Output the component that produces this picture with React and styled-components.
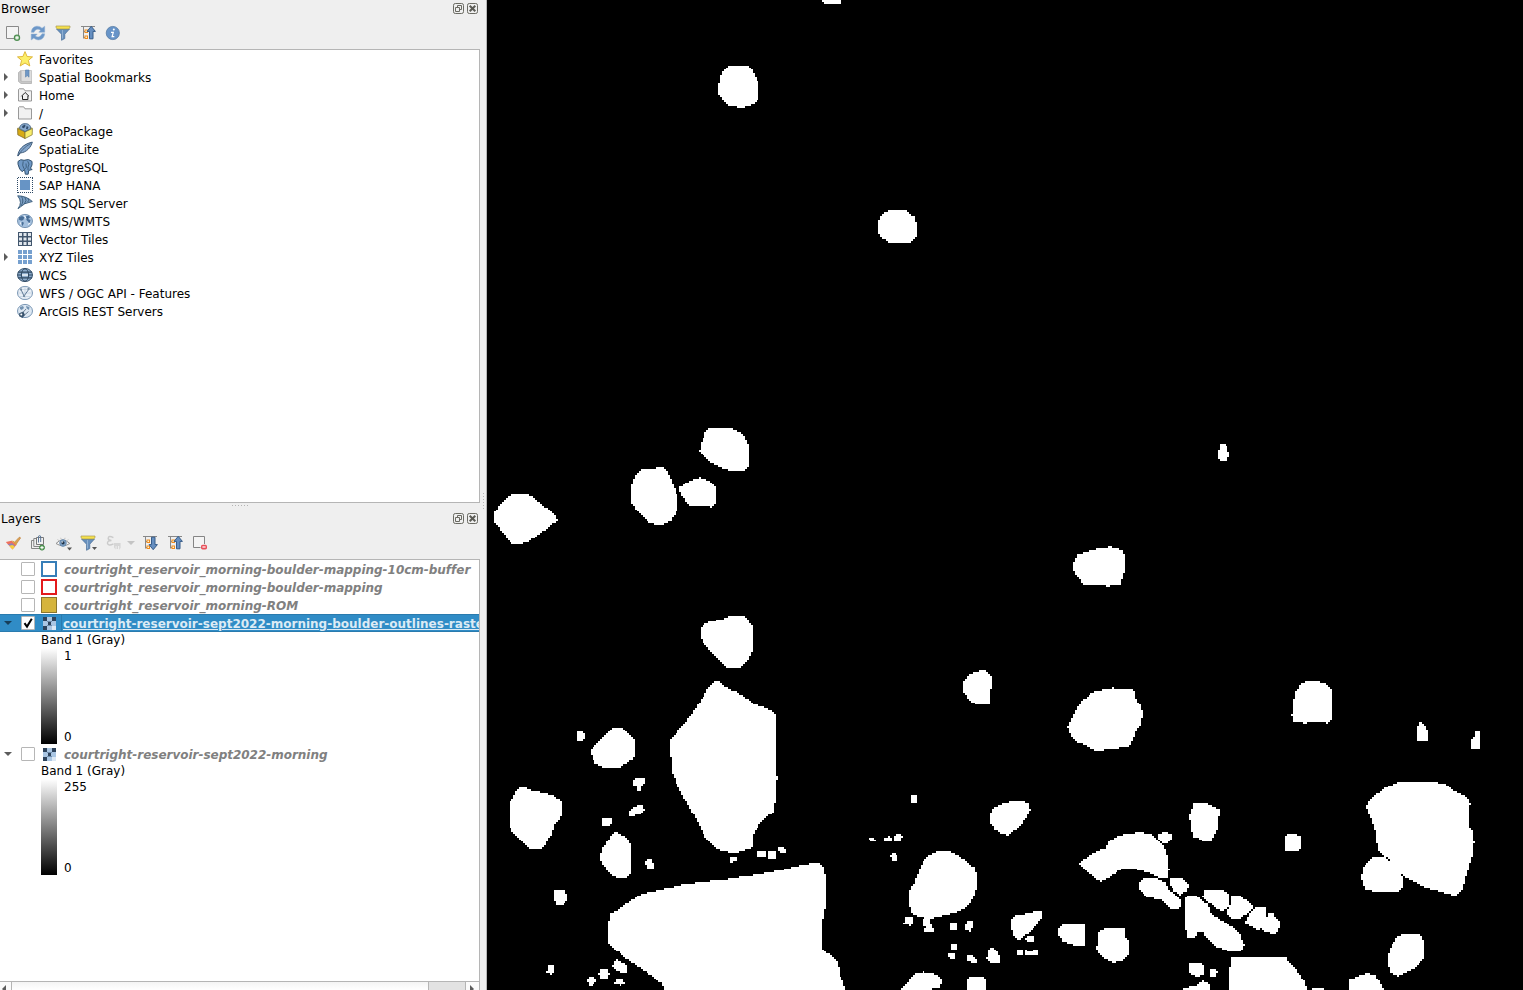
import React from "react";
import styled, { createGlobalStyle } from "styled-components";

const GlobalStyle = createGlobalStyle`
  * { box-sizing: border-box; }
  body {
    margin: 0;
    overflow: hidden;
    background: #efefef;
    color: #000;
    font-family: "DejaVu Sans", Verdana, sans-serif;
    font-size: 12px;
  }
  svg { display: block; flex: none; }
`;

const Window = styled.div`
  display: flex;
  width: 1523px;
  height: 990px;
  overflow: hidden;
`;
const Docks = styled.div`
  display: flex;
  flex-direction: column;
  width: 480px;
  flex: none;
`;
const SideHandle = styled.div`
  display: flex;
  align-items: center;
  justify-content: center;
  width: 7px;
  padding-top: 13px;
  flex: none;
  border-right: 1px solid #b8b8b8;
`;
const DockHandle = styled.div`
  display: flex;
  justify-content: center;
  height: 7px;
  padding-top: 2px;
  flex: none;
`;
const Dots = styled.div`
  width: ${(p) => (p.$vertical ? "1px" : "17px")};
  height: ${(p) => (p.$vertical ? "17px" : "1px")};
  background: repeating-linear-gradient(${(p) => (p.$vertical ? "180deg" : "90deg")}, #b4b4b4 0 1px, transparent 1px 3px);
`;
const Dock = styled.section`
  display: flex;
  flex-direction: column;
  height: ${(p) => p.$height}px;
  flex: none;
`;
const TitleBar = styled.header`
  display: flex;
  align-items: center;
  height: 17px;
  padding: 0 2px 0 1px;
  flex: none;
  gap: 3px;
`;
const Title = styled.span`
  flex: 1;
  line-height: 17px;
  padding-top: 2px;
`;
const ToolBar = styled.div`
  display: grid;
  grid-template-columns: ${(p) => p.$columns};
  align-items: center;
  height: 32px;
  padding-left: 5px;
  flex: none;
`;
const Tree = styled.div`
  flex: 1;
  min-height: 0;
  overflow: hidden;
  background: #fff;
  border: solid #b5b5b5;
  border-width: 1px 1px ${(p) => (p.$open ? 0 : 1)}px 0;
  display: flex;
  flex-direction: column;
`;
const TreeRow = styled.div`
  display: flex;
  align-items: center;
  height: 18px;
  flex: none;
  white-space: nowrap;
`;
const Branch = styled.span`
  display: flex;
  align-items: center;
  width: ${(p) => p.$width}px;
  padding-left: 4px;
  flex: none;
`;
const TreeLabel = styled.span`
  margin-left: 6px;
  padding-top: 2px;
  line-height: 18px;
`;
const LayerRow = styled(TreeRow)`
  background: ${(p) => (p.$selected ? "#308cc6" : "none")};
  box-shadow: ${(p) => (p.$selected ? "inset 0 1px #2a7bae, inset 0 -1px #2a7bae" : "none")};
`;
const CheckBox = styled.span`
  display: flex;
  width: 14px;
  height: 14px;
  border: 1px solid #b6b6b6;
  border-radius: 1px;
  background: #fff;
  flex: none;
`;
const Symbol = styled.span`
  display: flex;
  align-items: center;
  justify-content: center;
  width: 16px;
  height: 16px;
  margin-left: 6px;
  flex: none;
`;
const Swatch = styled.span`
  width: 16px;
  height: 16px;
  background: ${(p) => p.$fill};
  border: ${(p) => p.$width}px solid ${(p) => p.$stroke};
`;
const LayerName = styled.span`
  flex: 1;
  min-width: 0;
  overflow: hidden;
  margin-left: 4px;
  padding-left: ${(p) => (p.$selected ? 1 : 3)}px;
  height: 18px;
  line-height: ${(p) => (p.$selected ? 18 : 20)}px;
  font-weight: bold;
  font-style: ${(p) => (p.$selected ? "normal" : "italic")};
  letter-spacing: ${(p) => (p.$selected ? "0" : "-0.018px")};
  color: ${(p) => (p.$selected ? "#dcebf5" : "#808080")};
  text-decoration: ${(p) => (p.$selected ? "underline" : "none")};
  border: ${(p) => (p.$selected ? "1px solid #2a7bae" : "none")};
  border-right: 0;
`;
const BandLabel = styled.div`
  height: 16px;
  line-height: 17px;
  padding-left: 41px;
  flex: none;
`;
const Ramp = styled.div`
  display: flex;
  height: 96px;
  margin: 0 0 1px 41px;
  flex: none;
`;
const RampBar = styled.span`
  width: 16px;
  background: linear-gradient(#fff, #000);
`;
const RampLabels = styled.span`
  display: flex;
  flex-direction: column;
  justify-content: space-between;
  margin-left: 7px;
  padding-top: 1px;
  margin-bottom: -1px;
  line-height: 15px;
`;
const Spacer = styled.div`
  flex: 1;
`;
const ScrollBar = styled.div`
  display: flex;
  height: 9px;
  border-top: 1px solid #b5b5b5;
  background: linear-gradient(#f4f4f4, #fff);
  flex: none;
`;
const ScrollButton = styled.span`
  width: ${(p) => (p.$next ? 14 : 12)}px;
  padding: 3px 0 0 ${(p) => (p.$next ? 4 : 2)}px;
  border: solid #b5b5b5;
  border-width: ${(p) => (p.$next ? "0 0 0 1px" : "0 1px 0 0")};
  background: #fbfbfb;
`;
const ScrollThumb = styled.span`
  flex: 1;
`;
const ScrollRest = styled.span`
  width: 37px;
  border-left: 1px solid #b5b5b5;
  background: #e2e2e2;
`;
const MapCanvas = styled.main`
  flex: 1;
  background: #000;
`;

function Icon({ children, w = 16, h = 16 }) {
  return <svg width={w} height={h} viewBox={`0 0 ${w} ${h}`} fill="none">{children}</svg>;
}

const INK = "#3a5878";
const BLUE = "#6c97c8";

const RightArrow = () => <Icon w={5} h={8}><path d="M0 0L4 4L0 8Z" fill="#5c5c5c" /></Icon>;
const DownArrow = ({ color = "#5c5c5c" }) => <Icon w={8} h={4}><path d="M0 0H8L4 4Z" fill={color} /></Icon>;

const FloatButton = () => (
  <Icon w={11} h={11}>
    <rect x=".5" y=".5" width="10" height="10" rx="1.8" stroke="#6b6b63" />
    <path d="M4.5 4V2.5H8.5V6.5H7M2.5 4.5H6.5V8.5H2.5Z" stroke="#6b6b63" />
  </Icon>
);
const CloseButton = () => (
  <Icon w={11} h={11}>
    <rect x=".5" y=".5" width="10" height="10" rx="1.8" stroke="#6b6b63" />
    <path d="M2.7 2.7L8.3 8.3M8.3 2.7L2.7 8.3" stroke="#5b5b55" strokeWidth="2" />
  </Icon>
);

const AddLayer = () => (
  <Icon>
    <path d="M9.5 13.5H1.5V1.5H13.5V10" fill="#f4f4f4" stroke="#8a8a8a" />
    <circle cx="12" cy="12.8" r="2.6" fill="#b4d3b2" stroke="#509054" strokeWidth="1.2" />
    <path d="M12 11.4V14.2M10.6 12.8H13.4" stroke="#fff" strokeWidth=".9" />
  </Icon>
);
const Refresh = () => (
  <Icon>
    <path d="M1.3 7.3C1.5 3.2 4.2 1.2 7.2 1.2C9.3 1.2 10.7 2 12 3.3L14.7 1.2V7.2H8.8L10.5 5.2C8.2 3.4 5.2 4.1 4 7.3Z" fill={BLUE} stroke="#8eafd2" strokeWidth=".5" />
    <path d="M14.7 8.8C14.3 12.7 11.7 14.9 8.5 14.9C6.4 14.9 5 14.1 3.9 13L1.2 15V9.1H7.2L5.4 11C7.8 12.8 10.7 12 12 8.8Z" fill={BLUE} stroke="#8eafd2" strokeWidth=".5" />
  </Icon>
);
const FunnelShape = () => (
  <>
    <path d="M1.5 4L6.5 9.2V15.3L9.8 13.5V9.2L14.5 4Z" fill="#6790bd" stroke="#4c7099" strokeWidth=".7" />
    <path d="M7.5 5V13.5" stroke="#91b0d2" />
    <path d="M1 1H15V2.3L13.8 4H2.2L1 2.3Z" fill="#f4e14c" stroke="#a99a57" strokeWidth=".7" />
  </>
);
const Funnel = () => <Icon><FunnelShape /></Icon>;
const FunnelMenu = () => <Icon w={18}><FunnelShape /><path d="M12 12H17L14.5 15Z" fill="#555" /></Icon>;
const TreeMarks = () => (
  <>
    <path d="M1 1.5H15M3.5 2V13.5M3.5 6.5H5M3.5 12.5H5" stroke="#888" />
    <rect x="5" y="5" width="2.5" height="2.5" fill="#fff2ce" stroke="#ef8b1d" />
    <rect x="5" y="11" width="2.5" height="2.5" fill="#fff2ce" stroke="#ef8b1d" />
  </>
);
const Collapse = () => <Icon><TreeMarks /><path d="M11.2 1.3L15.4 6.4H13V13.8H9.5V6.4H7.1Z" fill="#668fc1" stroke="#365c89" /></Icon>;
const Expand = () => <Icon><TreeMarks /><path d="M11.2 14.7L15.4 9.6H13V2.2H9.5V9.6H7.1Z" fill="#668fc1" stroke="#365c89" /></Icon>;
const Info = () => (
  <Icon>
    <circle cx="7.8" cy="8" r="6.6" fill="#6794c8" stroke="#587ca5" strokeWidth=".8" />
    <circle cx="8.8" cy="4.6" r="1" fill="#fff" />
    <path d="M6 7.3H8.3L7.1 11.7H9.3" stroke="#fff" strokeWidth="1.2" />
  </Icon>
);
const Brush = () => (
  <Icon>
    <path d="M8.6 8.2L14 2.4Q15.5 1.6 15.4 3.2L10.8 9.8Z" fill="#dba255" stroke="#be7e3b" strokeWidth=".6" />
    <path d="M.8 7L6.5 5.8L11.3 10L7.5 14.4Z" fill="#f0705c" />
    <path d="M2.6 9.2L7 8.2L10 11L8.4 13Z" fill="#8b84bd" />
    <path d="M4.2 10.8L7.6 10L9.8 11.8L7.5 14.6Z" fill="#f7cf3c" />
    <path d="M6.4 5.6L8.6 6L11.8 9L11 10.2Z" fill="#d9a03f" />
  </Icon>
);
const AddGroup = () => (
  <Icon>
    <path d="M4 5.5H1.5V13.5H10M6 3.5H3.8V11.5H10" stroke="#858585" />
    <path d="M6.5 2.5H13.5V9.5H6.5Z" fill="#f2f2f2" stroke="#777" />
    <path d="M8.5 7.5V2Q8.5 .6 9.6 .6Q10.7 .6 10.7 2V7" stroke="#5b7697" strokeWidth="1" />
    <circle cx="12" cy="12.6" r="2.5" fill="#69a869" stroke="#438848" />
    <path d="M12 11V14.2M10.4 12.6H13.6" stroke="#fff" />
  </Icon>
);
const Eye = () => (
  <Icon w={18}>
    <path d="M1 8.5Q7.6 1.5 14.8 8.5Q8 13 1 8.5Z" fill="#f8f8f8" stroke="#909090" />
    <circle cx="8" cy="8" r="3.4" fill="#7b9fc4" stroke="#577ba0" strokeWidth=".6" />
    <circle cx="8" cy="7.8" r="1.6" fill="#203348" />
    <circle cx="7.2" cy="7" r=".7" fill="#fff" />
    <path d="M2.5 4.5L4 5.7M5.7 2.8L6.3 4.5M10 2.8L9.7 4.4M13.3 4.4L12 5.7" stroke="#b4b4b4" strokeWidth=".8" />
    <path d="M12 12.5H17L14.5 15.5Z" fill="#555" />
  </Icon>
);
const Expression = () => (
  <Icon>
    <path d="M7.4 2.6Q2.4 .1 2.2 3.3Q2.2 5.5 5.5 5.5Q1.2 5.6 1.5 8.3Q2.2 11.4 7.5 8.9" stroke="#cbcbcb" strokeWidth="1.5" />
    <path d="M8 8H14.6V12.7L13.2 15V11H12V14H10.6V11H9.6V14.5L8 12.6Z" fill="#d6d6d6" />
  </Icon>
);
const RemoveLayer = () => (
  <Icon>
    <path d="M8.5 12.5H1.5V1.5H12.5V9" fill="#f4f4f4" stroke="#858585" />
    <rect x="9" y="9.7" width="6" height="4.7" rx="1.6" fill="#e8505a" />
    <path d="M10.4 12H13.6" stroke="#fff" strokeWidth="1.2" />
  </Icon>
);

const Star = () => <Icon><path d="M8 .6L10.1 5.5L15.5 5.9L11.4 9.4L12.8 15L8 12L3.2 15L4.6 9.4L.5 5.9L5.9 5.5Z" fill="#fcef68" stroke="#dfb63b" /></Icon>;
const Bookmark = () => (
  <Icon>
    <path d="M1.5 3.5L4 1.5V12L14.5 12V14.5H4L1.5 12.5Z" fill="#c8c8c8" stroke="#a8a8a8" strokeWidth=".7" />
    <path d="M4.3 1.5H14.5V12.5H4.3Z" fill="#dedede" stroke="#b9b9b9" strokeWidth=".7" />
    <path d="M8.5 1H12V8.2L10.2 6.5L8.5 8.2Z" fill="#6f98c6" stroke="#587fa9" strokeWidth=".6" />
  </Icon>
);
const FolderShape = () => <path d="M1.5 14V2.5L2.2 1.8H6.7L8 3.8H14.5V14Z" fill="#f1f1f1" stroke="#8d8d8d" strokeWidth=".9" />;
const Folder = () => <Icon><FolderShape /></Icon>;
const HomeFolder = () => <Icon><FolderShape /><path d="M4.4 9.3L8.2 5.5L12 9.3M5.5 8.8V12.5H10.9V8.8" stroke="#222" /></Icon>;
const GeoPackage = () => (
  <Icon>
    <path d="M.6 5.4L8 8.8V15.5L.8 11.8Z" fill="#d8ab15" stroke="#806b25" strokeWidth=".8" />
    <path d="M15.4 5.4L8 8.8V15.5L15.2 11.8Z" fill="#f8ed6b" stroke="#8c7f36" strokeWidth=".8" />
    <path d="M.8 5.4L4 3.5L8 9L12.5 3.5L15.2 5.4L8 8.8Z" fill="#e4d34b" stroke="#766b38" strokeWidth=".5" />
    <path d="M2.6 5.8C2.4 2.4 5 .6 8.2 .6C11.6 .6 14 2.6 13.6 5.8L8 8.4Z" fill="#88a9cd" stroke={INK} strokeWidth=".7" />
    <path d="M5.2 3L8 1.4L8.5 3L7 5.2L5.2 4.7ZM9.7 3L11.5 4L10.5 6.4L9 5.8Z" fill="#304c6d" />
  </Icon>
);
const Feather = () => (
  <Icon>
    <path d="M.8 15C1.2 9.3 5.5 3.3 15.3 1.1C14 6 9.8 11.5 3.1 12Z" fill="#85a7cd" stroke="#3c5977" />
    <path d="M1 15.2Q4.5 7.8 13.5 2.6" stroke="#3c5977" strokeWidth=".8" />
  </Icon>
);
const Elephant = () => (
  <Icon>
    <path d="M1 2.5Q3.5-.5 7 1.3Q12-.7 15 2.4Q15.8 6 13.4 9.4L15.2 10.5L11.7 11.4L11.2 15.2H8.3L7.5 10.5L5.2 12.7Q2.3 11 1 5.2Z" fill="#6f98c5" stroke="#34536f" />
    <path d="M6.2 2.3Q4.8 6.7 7 9.7M10.7 2.2Q13.2 5 11 8.2V11M7.5 10.3L9.3 8.3L9 4.5" stroke="#34536f" strokeWidth=".8" />
  </Icon>
);
const SapHana = () => (
  <Icon>
    <rect x="3" y="3" width="10" height="10" fill="#6794c5" />
    <path d="M1 .5H16M1 15.5H16M.5 1V16M15.5 1V16" stroke="#2f4a66" strokeDasharray="1 1" />
  </Icon>
);
const SqlServer = () => (
  <Icon>
    <path d="M.7 .8Q9.5 1 15.3 6.5Q7.5 7.3 1 13.7Q6 7.5 .7 .8Z" fill="#7c9fc4" stroke="#3f617f" />
    <path d="M4.4 1.2Q7.5 6 4 11M7.8 2Q10.5 5.5 7.3 9M11 3.5Q12.7 5.4 10.5 7.2" stroke="#3f617f" />
  </Icon>
);
function Globe({ dark, fill = "#d3dfeb", children }) {
  return (
    <Icon>
      <ellipse cx="8" cy="8" rx="7.5" ry="6.6" fill={fill} stroke={dark ? "#2e4862" : "#6c8bac"} strokeWidth=".9" />
      {children}
    </Icon>
  );
}
const Wms = () => (
  <Globe fill="#a6c1de">
    <path d="M2 4.2L5 3L7.3 4.3L6.3 7L4.3 7.7L2 6.7ZM5 8.7L7 9.8L5.6 13L4.2 11ZM9 3.2L11.8 2.5L13 4.5L11 6L13.5 7L12.5 10.7L11 8.5L9.5 7Z" fill="#486e97" />
    <path d="M7.2 2.5L9 5.5M3.5 9.5L4 11.5M11 11.5L13 10" stroke="#fff" />
  </Globe>
);
const VectorTiles = () => (
  <Icon>
    <rect x="1" y="1" width="14" height="14" fill="#42566d" />
    {[0, 1, 2].flatMap((r) => [0, 1, 2].map((c) => <rect key={`${r}${c}`} x={2 + c * 4.5} y={2 + r * 4.5} width="3" height="3" fill="#e0e6ec" />))}
  </Icon>
);
const XyzTiles = () => (
  <Icon>
    {[0, 1, 2].flatMap((r) => [0, 1, 2].map((c) => <rect key={`${r}${c}`} x={1 + c * 5} y={1 + r * 5} width="4" height="4" fill="#76a0cf" />))}
  </Icon>
);
const Wcs = () => (
  <Globe dark fill="#8baaca">
    <path d="M1 5.2H15M.6 8H15.4M1 10.8H15" stroke="#2e4862" strokeWidth="1.2" />
    <ellipse cx="8" cy="8" rx="3.6" ry="6.2" stroke="#2e4862" />
    <path d="M5 8H11" stroke="#d7e4f1" strokeWidth="2" />
  </Globe>
);
const Wfs = () => (
  <Globe fill="#e9eff6">
    <path d="M8 1.5V14.5M1 8H15M2.5 4.5H13.5M2.5 11.5H13.5" stroke="#bdcedf" strokeWidth=".7" />
    <path d="M4 4.5L7 11L12 4" stroke="#607b97" />
    <path d="M3 3.5H5V5.5H3ZM6 10H8V12H6ZM10.5 3H12.5V5H10.5Z" fill="#768da3" />
  </Globe>
);
const ArcGis = () => (
  <Globe fill="#dce7f2">
    <path d="M3 4L6 3L7 5L4.7 7L3 6ZM9 3L12.5 4L12 7L9.7 5.5Z" fill="#7392b1" />
    <path d="M2.2 10.2L6.3 8.6L8 12L5.5 15L2.2 13.3Z" fill="#38536e" />
    <path d="M5 10.5L9 6M7.5 12L11.5 8.5" stroke="#50677f" strokeWidth=".8" />
    <circle cx="4.3" cy="11.5" r="1" fill="#fff" />
  </Globe>
);
const RasterIcon = () => (
  <svg width="13" height="13" viewBox="0 0 13 13" shapeRendering="crispEdges">
    <rect width="13" height="13" fill="#aac6e3" />
    <path d="M0 0H4V4H0ZM9 0H13V4H9ZM5 5H8V8H5ZM0 9H4V13H0Z" fill="#2e435b" />
    <path d="M4 4H9V5H4ZM4 8H9V9H4Z" fill="#6f8dac" />
    <path d="M9 9H13V13H9Z" fill="#dce8f4" />
  </svg>
);
const Check = () => <Icon w={12} h={12}><path d="M2.5 6.2L5 9.6L9.8 1.8" stroke="#000" strokeWidth="2" /></Icon>;

const BROWSER_ITEMS = [
  ["Favorites", Star, false],
  ["Spatial Bookmarks", Bookmark, true],
  ["Home", HomeFolder, true],
  ["/", Folder, true],
  ["GeoPackage", GeoPackage, false],
  ["SpatiaLite", Feather, false],
  ["PostgreSQL", Elephant, false],
  ["SAP HANA", SapHana, false],
  ["MS SQL Server", SqlServer, false],
  ["WMS/WMTS", Wms, false],
  ["Vector Tiles", VectorTiles, false],
  ["XYZ Tiles", XyzTiles, true],
  ["WCS", Wcs, false],
  ["WFS / OGC API - Features", Wfs, false],
  ["ArcGIS REST Servers", ArcGis, false],
];

// Boulder outlines, grouped by map sheet; each sheet has an origin and a unit size.
const SHEETS = [
  { x: 0, y: 0, scale: 1, outlines: [
    "822,0 843,0 841,3 825,3",
    "728,66 748,66 752,69 755,76 759,84 759,100 752,105 742,108 727,105 719,95 717,90 721,74",
    "888,211 905,210 915,218 917,226 916,238 910,244 890,244 880,236 877,226 882,214",
    "1220,444 1226,444 1229,453 1228,462 1219,462 1218,452",
    "1078,554 1100,548 1110,547 1124,550 1125,570 1121,584 1108,586 1083,584 1076,575 1072,566",
  ] },
  { x: 488, y: 410, scale: 1 / 3, outlines: [
    "75,252 115,252 135,262 160,283 195,308 210,330 165,365 120,395 95,402 75,402 55,382 30,350 20,335 18,312 35,285 60,262",
    "460,178 505,176 510,171 528,172 545,198 555,225 568,258 566,305 545,335 512,347 485,338 450,305 429,275 430,230 442,198",
    "570,235 605,212 635,202 670,215 684,235 684,280 675,290 610,289 590,268",
    "660,58 735,57 765,72 783,105 783,168 770,182 735,185 690,170 660,152 633,125 640,100 652,68",
    "640,650 660,636 700,628 720,618 770,619 791,645 795,710 790,735 760,772 715,772 685,745 648,700 639,680",
  ] },
  { x: 488, y: 660, scale: 1 / 3, outlines: [
    "685,60 700,70 718,85 750,97 780,118 800,133 838,145 863,163 864,250 862,300 864,345 870,348 868,356 865,365 863,410 857,455 832,474 803,508 797,520 792,562 765,574 735,579 700,573 680,563 655,535 640,510 620,470 600,435 575,392 560,355 550,330 549,290 543,288 543,243 575,207 605,170 625,142 645,112 665,78",
    "390,200 405,202 425,222 441,243 441,288 432,300 398,323 345,322 325,314 312,298 309,270 330,250 350,230 375,205",
    "268,216 280,216 288,222 288,238 280,243 268,240",
    "434,368 440,353 467,353 467,370 460,375 458,392 446,395 444,378 434,376",
    "465,434 468,450 450,465 430,468 421,464 421,455 440,438",
    "347,474 371,474 371,486 363,498 343,498 342,482",
    "92,384 112,384 130,392 160,397 198,407 222,428 224,452 213,480 200,492 188,528 163,567 142,570 122,565 105,550 75,515 66,505 66,428 80,405",
    "380,516 400,522 415,535 428,550 428,642 412,655 390,657 368,643 342,610 337,590 342,565 358,546 370,522",
    "474,598 490,594 497,612 497,626 480,627 471,612",
    "200,687 228,687 240,705 238,722 218,738 203,734 198,715",
    "722,588 750,588 745,600 733,609 723,605",
    "808,571 832,571 832,590 815,594 804,584",
    "843,576 863,576 863,594 843,594",
    "864,568 875,558 892,570 892,577 878,580",
    "990,606 960,612 910,622 870,632 810,643 750,652 700,660 630,667 580,675 520,688 460,702 410,735 367,762 360,795 360,852 380,868 415,895 460,925 495,950 520,970 530,990 1074,990 1065,965 1054,940 1050,910 1030,890 1004,865 1002,790 1010,760 1016,690 1010,630 1003,615",
    "185,912 200,920 200,935 188,942 177,938 178,920",
    "340,927 355,926 366,940 355,958 343,958 330,942",
    "385,897 395,905 415,915 420,936 400,938 372,922 376,905",
    "300,950 318,948 326,962 312,978 304,978 297,965",
    "385,953 405,955 411,972 397,977 380,970",
  ] },
  { x: 818, y: 660, scale: 1 / 3, outlines: [
    "485,30 505,32 524,52 524,85 519,90 517,130 508,135 475,135 455,120 438,100 436,65 455,42",
    "880,84 940,85 948,95 955,120 970,140 972,172 965,195 955,210 940,250 930,262 880,265 845,272 830,270 800,255 780,248 760,230 750,200 765,165 790,125 820,98",
    "276,408 297,408 297,426 280,426",
    "570,426 605,422 630,428 636,448 622,475 605,500 570,526 548,520 530,508 519,492 519,455 535,438",
    "153,536 165,533 177,538 175,546 157,547",
    "198,537 210,528 222,536 222,545 200,545",
    "228,530 242,518 255,530 248,543 228,543",
    "217,586 228,579 238,590 236,605 224,605",
    "370,570 395,574 430,592 470,625 477,655 472,695 450,738 420,755 375,766 335,778 290,765 278,752 273,720 275,690 290,665 305,625 325,590",
    "260,770 283,768 286,790 275,798 258,792",
    "316,778 335,778 340,795 349,808 347,818 322,818 320,805 328,800 316,797",
    "397,790 415,788 416,808 397,808",
    "450,780 465,780 465,795 455,815 440,810 440,798",
    "398,850 416,850 416,868 398,868",
    "390,880 410,880 414,898 400,900 390,892",
    "448,887 472,890 474,907 447,906",
    "522,860 530,870 546,888 546,912 520,910 507,898 510,872",
    "590,768 650,755 655,750 677,758 668,778 650,803 605,840 590,832 580,805 579,780",
    "622,832 645,826 652,835 648,848 625,848",
    "597,867 615,867 615,888 597,888",
    "621,870 636,877 648,867 660,867 660,888 621,887",
    "735,795 798,795 802,860 780,858 735,845 720,825 722,805",
    "855,808 920,806 922,830 932,845 932,885 910,905 880,907 850,890 837,868 840,820",
    "250,990 270,965 290,940 315,935 345,937 365,950 374,965 365,982 335,990",
    "445,990 450,955 460,948 495,948 507,962 507,990",
  ] },
  { x: 1100, y: 760, scale: 1 / 3, outlines: [
    "-63,310 -41,292 -5,272 14,266 30,240 75,222 120,216 155,222 185,250 198,275 204,300 206,330 200,352 180,354 150,340 120,330 80,323 55,333 30,350 2,365 -16,355 -40,332",
    "175,222 195,215 216,224 214,238 203,249 185,248 174,238",
    "280,130 318,130 357,146 356,180 350,210 335,242 310,242 278,230 272,200 268,170",
    "565,222 578,219 600,230 600,268 590,276 560,275 555,255 556,232",
    "130,355 165,353 195,368 205,388 240,415 243,440 225,450 205,442 180,418 140,412 118,390 116,370",
    "210,357 245,354 265,375 262,392 240,404 225,395 208,375",
    "260,410 285,404 325,435 335,462 395,500 420,525 434,555 425,572 395,576 345,560 322,535 308,515 292,518 283,535 262,536 256,500 254,420",
    "315,390 370,390 387,400 387,440 365,455 330,430 309,412",
    "397,405 420,406 455,435 455,448 418,478 400,478 380,460 390,440",
    "475,438 500,442 500,458 495,470 500,476 504,458 518,460 540,490 538,505 525,521 500,518 485,505 475,510 432,490 455,450",
    "265,610 300,608 315,620 314,640 300,648 285,647 265,637",
    "333,627 345,627 353,637 345,648 333,647",
    "246,690 260,682 280,680 310,662 330,675 333,690",
    "396,592 500,592 555,590 590,630 610,660 620,690 387,690 388,640",
    "635,690 640,682 668,682 672,690",
  ] },
  { x: 1290, y: 660, scale: 1 / 3, outlines: [
    "50,63 85,63 110,75 126,92 126,170 118,186 110,190 108,186 50,186 50,191 37,191 36,186 12,184 6,170 8,130 18,95 30,75",
    "383,187 398,187 413,208 413,240 408,246 381,246",
    "556,215 568,213 573,225 573,264 543,264 543,236 553,230",
    "330,366 435,366 470,375 495,395 530,412 540,430 534,450 534,500 548,515 551,545 545,590 530,640 518,690 500,704 485,704 410,683 340,648 320,635 298,600 265,572 260,540 255,510 240,465 228,440 245,415 290,380",
    "262,588 280,590 300,606 322,636 340,655 342,682 320,696 262,696 225,687 212,655 218,625 240,598",
    "345,820 390,822 402,840 402,895 375,925 325,948 300,935 291,900 300,865 320,832",
    "178,958 230,938 255,945 275,975 282,990 180,990",
  ] },
];

const CELL = 1.93;

// Turns an outline into the raster cells it covers, one run of cells per scan line.
function rasterize(sheet, outline) {
  const points = outline.split(" ").map((pair) => {
    const [x, y] = pair.split(",").map(Number);
    return [sheet.x + x * sheet.scale, sheet.y + y * sheet.scale];
  });
  const ys = points.map((p) => p[1]);
  const first = Math.round(Math.min(...ys) / CELL);
  const last = Math.max(first + 1, Math.round(Math.max(...ys) / CELL));
  let d = "";
  for (let row = first; row < last; row += 1) {
    const y = (row + 0.5) * CELL;
    const hits = [];
    points.forEach(([x1, y1], i) => {
      const [x2, y2] = points[(i + 1) % points.length];
      if (y1 <= y !== y2 <= y) hits.push(x1 + ((y - y1) / (y2 - y1)) * (x2 - x1));
    });
    hits.sort((a, b) => a - b);
    const top = Math.round(row * CELL);
    const bottom = Math.round((row + 1) * CELL);
    for (let i = 0; i + 1 < hits.length; i += 2) {
      const left = Math.round(Math.round(hits[i] / CELL) * CELL);
      const right = Math.round(Math.round(hits[i + 1] / CELL) * CELL);
      if (right > left) d += `M${left} ${top}H${right}V${bottom}H${left}Z`;
    }
  }
  return d;
}

const BOULDERS = SHEETS.flatMap((sheet) => sheet.outlines.map((outline) => rasterize(sheet, outline)));

function BrowserPanel() {
  return (
    <Dock $height={503}>
      <TitleBar><Title>Browser</Title><FloatButton /><CloseButton /></TitleBar>
      <ToolBar $columns="repeat(5, 25px)"><AddLayer /><Refresh /><Funnel /><Collapse /><Info /></ToolBar>
      <Tree>
        {BROWSER_ITEMS.map(([label, ItemIcon, branch]) => (
          <TreeRow key={label}>
            <Branch $width={17}>{branch && <RightArrow />}</Branch>
            <ItemIcon />
            <TreeLabel>{label}</TreeLabel>
          </TreeRow>
        ))}
      </Tree>
    </Dock>
  );
}

function Layer({ name, children, branch, selected }) {
  return (
    <LayerRow $selected={selected}>
      <Branch $width={21}>{branch && <DownArrow color={selected ? "#173f5b" : undefined} />}</Branch>
      <CheckBox>{selected && <Check />}</CheckBox>
      <Symbol>{children}</Symbol>
      <LayerName $selected={selected}>{name}</LayerName>
    </LayerRow>
  );
}

function BandLegend({ max }) {
  return (
    <>
      <BandLabel>Band 1 (Gray)</BandLabel>
      <Ramp><RampBar /><RampLabels><span>{max}</span><span>0</span></RampLabels></Ramp>
    </>
  );
}

function LayersPanel() {
  return (
    <Dock $height={480}>
      <TitleBar><Title>Layers</Title><FloatButton /><CloseButton /></TitleBar>
      <ToolBar $columns="25px 25px 25px 26px 21px 15px 25px 25px 25px">
        <Brush /><AddGroup /><Eye /><FunnelMenu /><Expression /><DownArrow color="#c4c4c4" /><Expand /><Collapse /><RemoveLayer />
      </ToolBar>
      <Tree $open>
        <Layer name="courtright_reservoir_morning-boulder-mapping-10cm-buffer"><Swatch $fill="#fff" $stroke="#377eb8" $width={2} /></Layer>
        <Layer name="courtright_reservoir_morning-boulder-mapping"><Swatch $fill="#fff" $stroke="#e31a1c" $width={2} /></Layer>
        <Layer name="courtright_reservoir_morning-ROM"><Swatch $fill="#d5b43c" $stroke="#8b762c" $width={1} /></Layer>
        <Layer name="courtright-reservoir-sept2022-morning-boulder-outlines-raster" branch selected><RasterIcon /></Layer>
        <BandLegend max="1" />
        <Layer name="courtright-reservoir-sept2022-morning" branch><RasterIcon /></Layer>
        <BandLegend max="255" />
        <Spacer />
        <ScrollBar>
          <ScrollButton><Icon w={5} h={8}><path d="M4 0L0 4L4 8Z" fill="#5c5c5c" /></Icon></ScrollButton>
          <ScrollThumb />
          <ScrollRest />
          <ScrollButton $next><RightArrow /></ScrollButton>
        </ScrollBar>
      </Tree>
    </Dock>
  );
}

export default function App() {
  return (
    <Window>
      <GlobalStyle />
      <Docks>
        <BrowserPanel />
        <DockHandle><Dots /></DockHandle>
        <LayersPanel />
      </Docks>
      <SideHandle><Dots $vertical /></SideHandle>
      <MapCanvas>
        <svg width="1036" height="990" viewBox="487 0 1036 990" fill="#fff" shapeRendering="crispEdges">
          {BOULDERS.map((d, i) => <path key={i} d={d} />)}
        </svg>
      </MapCanvas>
    </Window>
  );
}
